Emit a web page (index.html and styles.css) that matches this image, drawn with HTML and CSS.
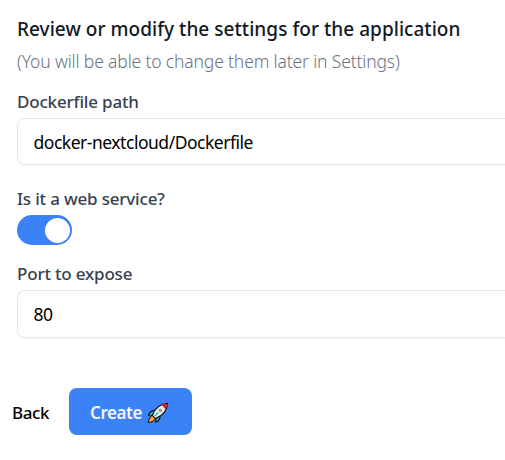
FILE: index.html
```
<!DOCTYPE html>
<html lang="en">
<head>
<meta charset="utf-8">
<title>Application settings</title>
<link rel="stylesheet" href="styles.css">
</head>
<body>
<main class="settings">
  <h1 class="title">Review or modify the settings for the application</h1>
  <p class="hint">(You will be able to change them later in Settings)</p>
  <label class="label label-path">Dockerfile path</label>
  <div class="field"><span class="value value-path">docker-nextcloud/Dockerfile</span></div>
  <label class="label label-web">Is it a web service?</label>
  <div class="toggle"><span class="knob"></span></div>
  <label class="label label-port">Port to expose</label>
  <div class="field field-port"><span class="value value-port">80</span></div>
  <div class="actions">
    <span class="back">Back</span>
    <div class="create"><span class="create-text">Create</span>
      <svg class="rocket" viewBox="0 0 22 22" width="22" height="22">
        <path d="M6 8.7 10.3 7.5 6.3 13 1.5 13.2C2 11 3.8 9.5 6 8.7ZM13.3 12.2 12.8 16C12 18.5 10.6 19.8 8.8 20.3L8.7 15.6Z" fill="#28c0e8" stroke="#111" stroke-width="1.1" stroke-linejoin="round"/>
        <path d="M5.5 13.2C3 14.2 1.6 17.5 1.3 20.6 4.6 20.3 7.6 19 8.7 16.4Z" fill="#f7842f" stroke="#111" stroke-width="1" stroke-linejoin="round"/>
        <path d="M5.4 15.2C3.8 16 2.8 18 2.5 19.5 4.4 19 6 18.2 6.8 16.5Z" fill="#ffb52e"/>
        <path d="M5.3 13.3C7.5 6.7 12.3 2 20.4 1.3 20.3 8.2 15.5 13.7 8.6 16.6Z" fill="#eeeeef" stroke="#111" stroke-width="1.2" stroke-linejoin="round"/>
        <path d="M14.5 2.8C16 2 18 1.7 19.8 1.9 19.8 3.8 19.4 5.8 18.4 7.3Z" fill="#e5162c"/>
        <circle cx="13.3" cy="8.4" r="1.8" fill="#939aa5"/>
        <path d="M8.2 13.5 10.8 11" stroke="#28c0e8" stroke-width="1.7" stroke-linecap="round"/>
      </svg>
    </div>
  </div>
</main>
</body>
</html>
```
FILE: styles.css
```
* { box-sizing: border-box; }
body {
  margin: 0;
  background: #fff;
  font-family: "Noto Sans", "Open Sans", sans-serif;
}
.settings {
  display: flex;
  flex-direction: column;
  padding: 13px 0 0 17px;
  white-space: nowrap;
}
.title {
  margin: 0;
  font-size: 19px;
  line-height: 32px;
  font-weight: 500;
  letter-spacing: .045px;
  color: #111827;
}
.hint {
  margin: 0;
  padding-bottom: 1px;
  font-size: 17.5px;
  line-height: 32px;
  font-weight: 350;
  letter-spacing: -.15px;
  color: #6b7280;
}
.label {
  font-size: 17px;
  line-height: 24px;
  font-weight: 500;
  letter-spacing: -.18px;
  color: #374151;
}
.label-path { margin-top: 12px; }
.label-web { margin-top: 22px; }
.label-port { margin-top: 17px; }
.field {
  display: flex;
  align-items: center;
  height: 47px;
  margin-top: 4px;
  padding-left: 15.5px;
  border: 1px solid #e5e7eb;
  border-right: 0;
  border-radius: 8px 0 0 8px;
  box-shadow: 0 1px 2px rgba(0, 0, 0, .05);
}
.field-port { height: 48px; }
.value { font-size: 17.5px; line-height: 28px; letter-spacing: -.48px; color: #000; }
.toggle {
  display: flex;
  align-items: center;
  justify-content: flex-end;
  width: 55px;
  height: 30px;
  margin-top: 4px;
  padding-right: 2px;
  border-radius: 15px;
  background: #3b82f6;
}
.knob { width: 25px; height: 25px; border-radius: 50%; background: #fff; }
.actions {
  display: flex;
  align-items: center;
  height: 47px;
  margin: 50px 0 0 -5px;
}
.back { width: 57px; padding-top: 2px; font-size: 17px; font-weight: 500; letter-spacing: -.4px; color: #000; }
.create {
  display: flex;
  align-items: center;
  width: 123px;
  height: 47px;
  padding-left: 21px;
  border-radius: 8px;
  background: #3b82f6;
  box-shadow: 0 1px 2px rgba(0, 0, 0, .05);
}
.create-text { width: 57px; padding-top: 2px; font-size: 17px; font-weight: 600; letter-spacing: -.45px; color: #f3f6ff; }
.rocket { margin-top: 2px; }
```
